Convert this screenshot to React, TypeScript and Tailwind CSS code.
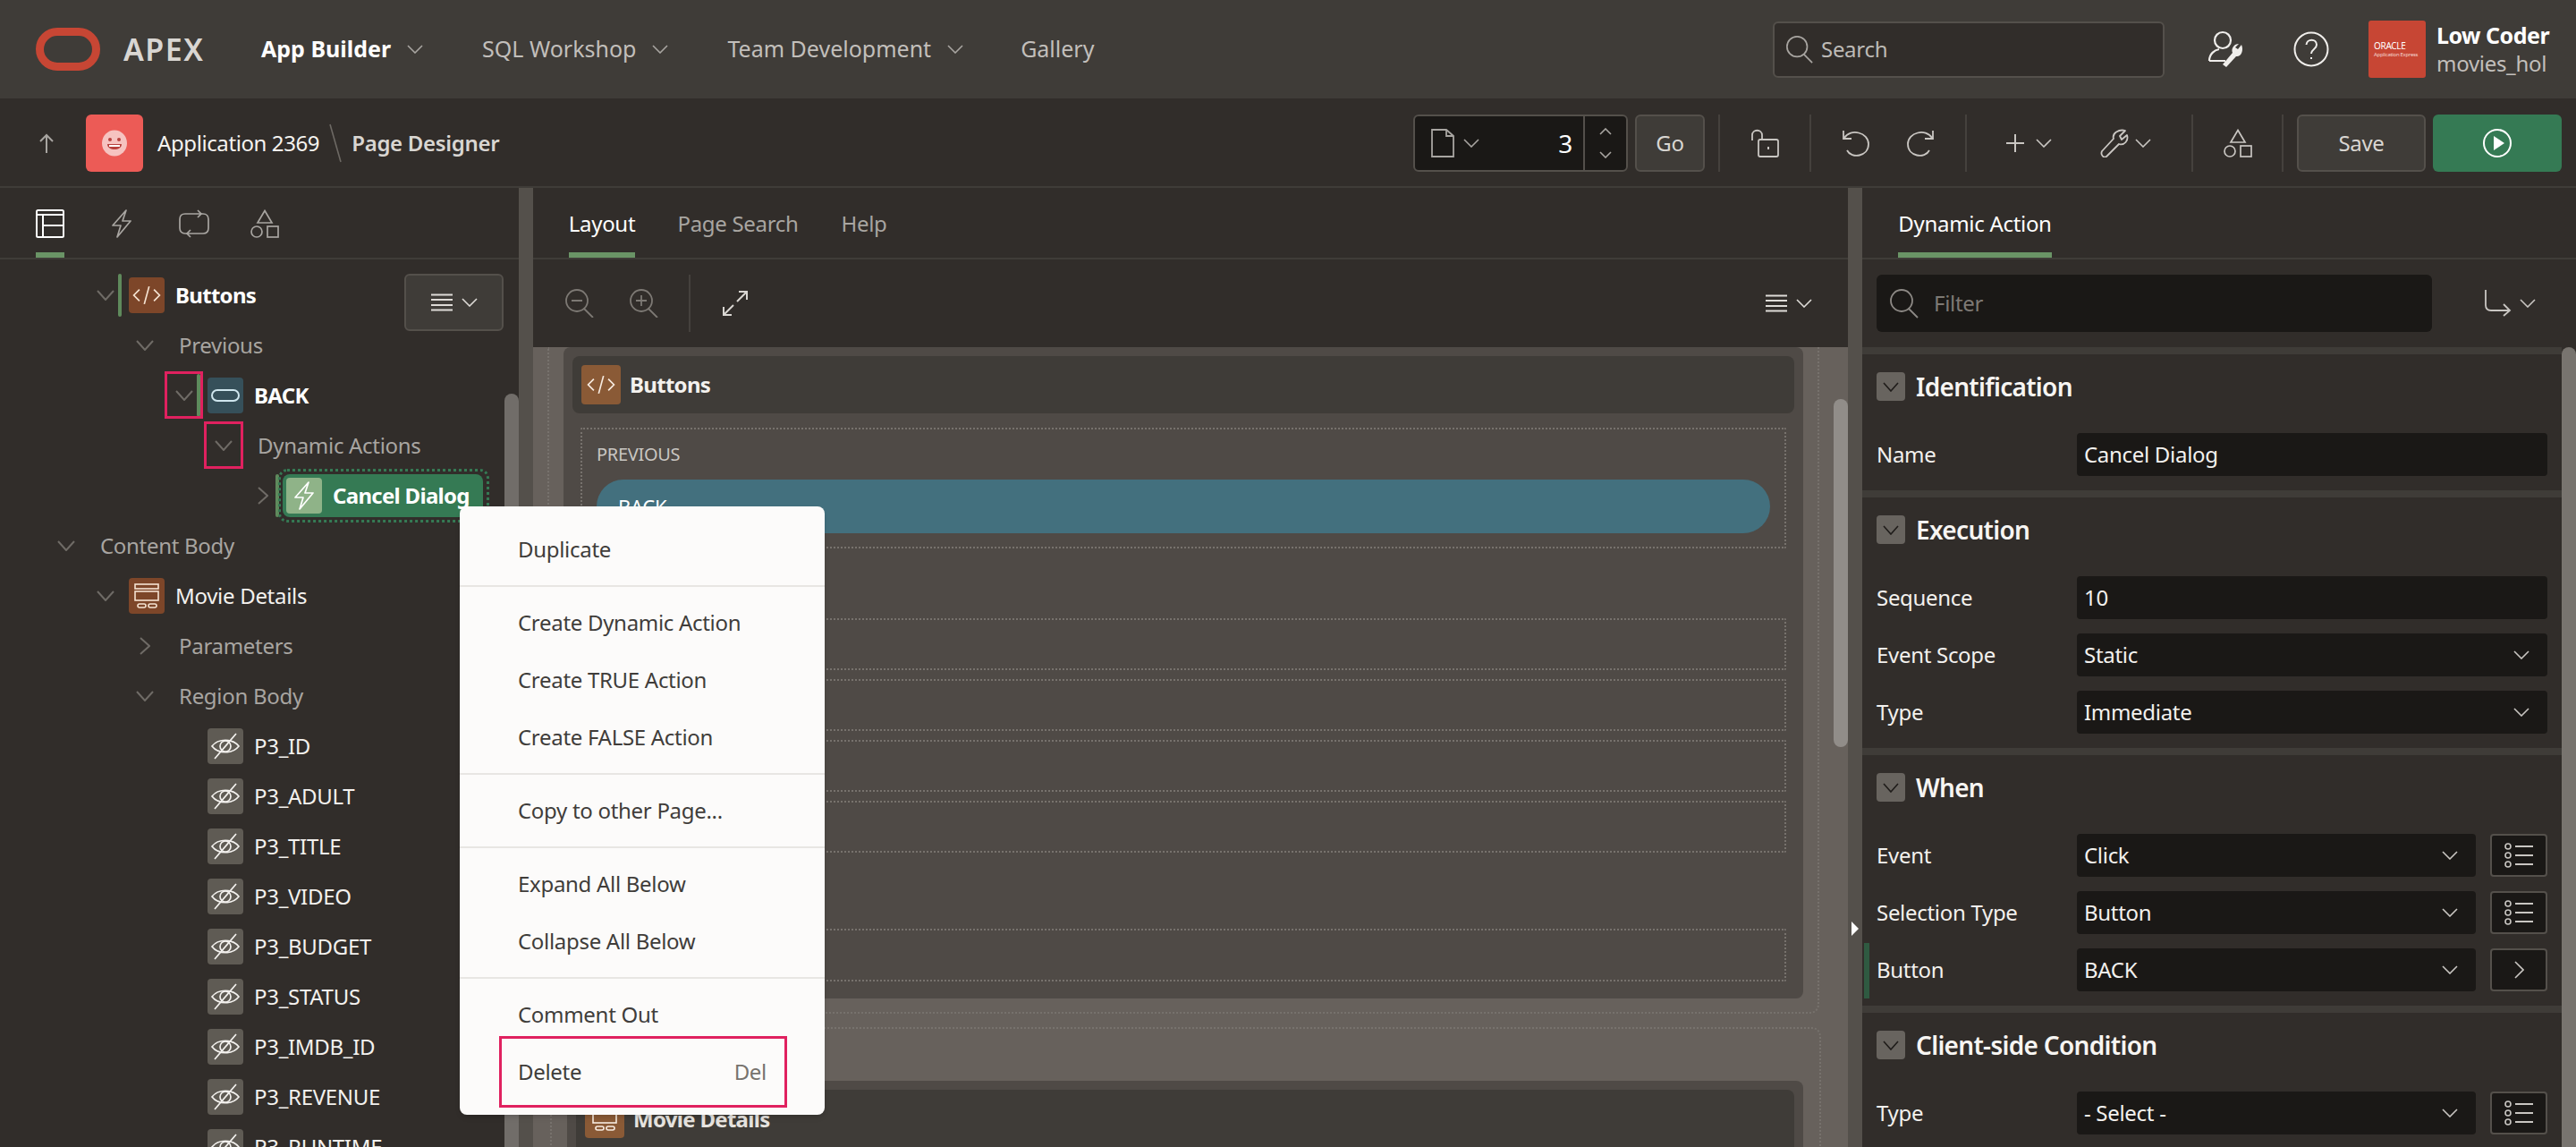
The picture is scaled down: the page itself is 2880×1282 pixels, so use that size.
import React from "react";

const font = "font-['Noto_Sans','Open_Sans',sans-serif]";

function Chev({ w = 16, h = 9, dir = "down", color = "#a8a5a1", sw = 1.6 }: { w?: number; h?: number; dir?: string; color?: string; sw?: number }) {
  const d =
    dir === "down"
      ? `M1 1 L${w / 2} ${h - 1} L${w - 1} 1`
      : dir === "up"
        ? `M1 ${h - 1} L${w / 2} 1 L${w - 1} ${h - 1}`
        : `M1 1 L${w - 1} ${h / 2} L1 ${h - 1}`;
  return (
    <svg width={w} height={h} viewBox={`0 0 ${w} ${h}`} fill="none" className="shrink-0">
      <path d={d} stroke={color} strokeWidth={sw} />
    </svg>
  );
}

function SearchIcon({ size = 34, color = "#a8a5a1" }: { size?: number; color?: string }) {
  return (
    <svg width={size} height={size} viewBox="0 0 34 34" fill="none" className="shrink-0">
      <ellipse cx="14" cy="14" rx="12" ry="12" stroke={color} strokeWidth="1.8" />
      <path d="M22 23 L32 33" stroke={color} strokeWidth="1.8" />
    </svg>
  );
}

function Shapes({ color = "#c9c6c2" }: { color?: string }) {
  return (
    <svg width="34" height="32" viewBox="0 0 34 32" fill="none" className="shrink-0">
      <path d="M17 1.5 L25 15 H9 Z" stroke={color} strokeWidth="1.7" />
      <circle cx="8" cy="25" r="6" stroke={color} strokeWidth="1.7" />
      <rect x="20" y="19" width="12" height="12" stroke={color} strokeWidth="1.7" />
    </svg>
  );
}

function Bolt({ color = "#a8a5a1", w = 24, h = 32 }: { color?: string; w?: number; h?: number }) {
  return (
    <svg width={w} height={h} viewBox="0 0 24 32" fill="none" className="shrink-0">
      <path d="M17 1 L2 18 H11 L7 31 L22 13 H13 Z" stroke={color} strokeWidth="1.7" strokeLinejoin="round" />
    </svg>
  );
}

function ListLines() {
  return (
    <svg width="26" height="20" viewBox="0 0 26 20" fill="none" className="shrink-0">
      <path d="M1 1.5 H25 M1 7 H25 M1 13 H25 M1 18.5 H25" stroke="#dedbd7" strokeWidth="1.8" />
    </svg>
  );
}

function CodeIcon({ size = 40, color = "#f5e3d2" }: { size?: number; color?: string }) {
  return (
    <svg width={size} height={size} viewBox="0 0 40 40" fill="none">
      <path d="M11 13 L4 20 L11 27 M29 13 L36 20 L29 27 M23 9 L17 31" stroke={color} strokeWidth="1.9" />
    </svg>
  );
}

function EyeOff() {
  return (
    <svg width="34" height="34" viewBox="0 0 34 34" fill="none">
      <path d="M2 17 C9 8 25 8 32 17 C25 26 9 26 2 17 Z" stroke="#f3f1ee" strokeWidth="1.7" />
      <circle cx="17" cy="17" r="6" stroke="#f3f1ee" strokeWidth="1.7" />
      <path d="M5 31 L29 3" stroke="#f3f1ee" strokeWidth="1.7" />
    </svg>
  );
}

function RegionIcon({ color = "#f5e3d2" }: { color?: string }) {
  return (
    <svg width="32" height="30" viewBox="0 0 32 30" fill="none">
      <rect x="3" y="2" width="26" height="5" stroke={color} strokeWidth="1.6" />
      <rect x="3" y="10" width="26" height="10" stroke={color} strokeWidth="1.6" />
      <rect x="6" y="24" width="9" height="4" rx="2" stroke={color} strokeWidth="1.6" />
      <rect x="18" y="24" width="9" height="4" rx="2" stroke={color} strokeWidth="1.6" />
    </svg>
  );
}

function NavItem({ label, active, chevron = true }: { label: string; active?: boolean; chevron?: boolean }) {
  return (
    <div className="flex items-center gap-[18px]">
      <span className={active ? "text-[25px] font-bold tracking-normal text-white" : "text-[25px] tracking-normal text-[#c2bfbb]"}>{label}</span>
      {chevron && <Chev w={18} h={10} color="#a8a5a1" />}
    </div>
  );
}

function Divider() {
  return <div className="h-16 w-[2px] shrink-0 bg-[#45413d]" />;
}

function TopBar() {
  return (
    <header className="flex h-[110px] shrink-0 items-center bg-[#3f3c38] pl-10 pr-7">
      <svg width="72" height="48" viewBox="0 0 72 48" fill="none" className="shrink-0">
        <rect x="4.5" y="4.5" width="63" height="39" rx="19.5" stroke="#c74634" strokeWidth="9" />
      </svg>
      <span className="ml-[26px] w-[154px] text-[34px] font-semibold tracking-[1.5px] text-[#d9d6d2]">APEX</span>
      <NavItem label="App Builder" active />
      <div className="ml-[66px]"><NavItem label="SQL Workshop" /></div>
      <div className="ml-[66px]"><NavItem label="Team Development" /></div>
      <div className="ml-[64px]"><NavItem label="Gallery" chevron={false} /></div>
      <div className="ml-auto flex h-[63px] w-[438px] items-center gap-2 rounded-md border-2 border-[#54504b] bg-[#312d2a] pl-3">
        <SearchIcon size={32} />
        <span className="text-[24px] text-[#bdbab6]">Search</span>
      </div>
      <svg width="42" height="42" viewBox="0 0 42 42" fill="none" className="ml-[48px] shrink-0">
        <circle cx="17" cy="11" r="9" stroke="#f0eeeb" strokeWidth="2.2" />
        <path d="M2 34 C2 26 8 22 13 21 M2 34 H20" stroke="#f0eeeb" strokeWidth="2.2" />
        <path d="M38 16 L34 21 L31 19 L35 15 C30 15 26 20 28 25 L17 38 L21 41 L32 29 C37 30 41 23 38 16 Z" fill="#f0eeeb" />
      </svg>
      <svg width="40" height="40" viewBox="0 0 40 40" fill="none" className="ml-[54px] shrink-0">
        <circle cx="20" cy="20" r="18.5" stroke="#f0eeeb" strokeWidth="2" />
        <path d="M14.5 15 C15 8 26 8 26 15 C26 20 20 20 20 25 M20 29 V31" stroke="#f0eeeb" strokeWidth="2" />
      </svg>
      <div className="ml-[44px] flex h-16 w-16 shrink-0 flex-col justify-center rounded-[3px] bg-[#c74634] pl-[6px] text-white">
        <span className="text-[10px] leading-[12px]">ORACLE</span>
        <span className="whitespace-nowrap text-[6px] leading-[9px] text-[#f3d5cf]">Application Express</span>
      </div>
      <div className="ml-[12px] flex w-[128px] flex-col whitespace-nowrap">
        <span className="text-[25px] leading-[32px] font-bold tracking-[-0.5px] text-white">Low Coder</span>
        <span className="text-[24px] leading-[32px] text-[#c2bfbb]">movies_hol</span>
      </div>
    </header>
  );
}

function SecondBar() {
  return (
    <div className="flex h-[100px] shrink-0 items-start border-b-2 border-[#3f3c38] bg-[#312d2a] pt-[18px] pl-[44px]">
      <div className="flex h-16 items-center">
        <svg width="16" height="22" viewBox="0 0 16 22" fill="none" className="shrink-0">
          <path d="M8 22 V2 M1 9 L8 2 L15 9" stroke="#a8a5a1" strokeWidth="2" />
        </svg>
        <div className="ml-9 flex h-16 w-16 items-center justify-center rounded-md bg-[#ec5b56]">
          <svg width="30" height="30" viewBox="0 0 30 30">
            <ellipse cx="15" cy="15" rx="14" ry="14.5" fill="#f6c3c0" />
            <circle cx="10" cy="11" r="2" fill="#b8423e" />
            <circle cx="20" cy="11" r="2" fill="#b8423e" />
            <path d="M7 16 H23 C23 24 7 24 7 16 Z" fill="#b8423e" />
            <path d="M9 17 H21 V19 H9 Z" fill="#ffffff" />
          </svg>
        </div>
        <span className="ml-4 text-[24px] tracking-[-0.4px] text-[#f5f3f0]">Application 2369</span>
        <svg width="16" height="44" viewBox="0 0 16 44" className="mx-[10px] shrink-0">
          <path d="M2 1 L14 43" stroke="#6d6964" strokeWidth="1.6" />
        </svg>
        <span className="text-[24px] font-semibold tracking-[-0.3px] text-[#d9d6d2]">Page Designer</span>
      </div>
      <div className="ml-auto flex h-16 items-center pr-4">
        <div className="flex h-16 w-[240px] items-stretch rounded-md border-2 border-[#54504b] bg-[#1a1816]">
          <div className="flex flex-1 items-center pl-[18px] pr-3">
            <svg width="26" height="32" viewBox="0 0 26 32" fill="none" className="shrink-0">
              <path d="M1 1 H17 L25 8 V31 H1 Z M17 1 V8 H25" stroke="#a8a5a1" strokeWidth="1.8" />
            </svg>
            <span className="ml-[10px]"><Chev w={18} h={10} /></span>
            <span className="ml-auto text-[28px] text-white">3</span>
          </div>
          <div className="flex w-12 flex-col items-center justify-center gap-[18px] border-l-2 border-[#54504b]">
            <Chev w={14} h={8} dir="up" />
            <Chev w={14} h={8} />
          </div>
        </div>
        <div className="ml-2 flex h-16 w-[78px] items-center justify-center rounded-md border-2 border-[#54504b] bg-[#3f3c38] text-[24px] text-[#d9d6d2]">Go</div>
        <div className="ml-[15px]"><Divider /></div>
        <svg width="32" height="32" viewBox="0 0 32 32" fill="none" className="ml-[34px] shrink-0">
          <path d="M2 13 V7 C2 0 13 0 13 7 V12" stroke="#c9c6c2" strokeWidth="1.8" />
          <rect x="9" y="12" width="22" height="19" rx="2" stroke="#c9c6c2" strokeWidth="1.8" />
          <path d="M20 20 V23" stroke="#c9c6c2" strokeWidth="2" />
        </svg>
        <div className="ml-[34px]"><Divider /></div>
        <svg width="32" height="32" viewBox="0 0 32 32" fill="none" className="ml-[34px] shrink-0">
          <path d="M2 2 V11 H11 M3 10 C10 -1 30 4 30 17 C30 31 11 34 6 24" stroke="#c9c6c2" strokeWidth="1.8" />
        </svg>
        <svg width="32" height="32" viewBox="0 0 32 32" fill="none" className="ml-10 shrink-0">
          <path d="M30 2 V11 H21 M29 10 C22 -1 2 4 2 17 C2 31 21 34 26 24" stroke="#c9c6c2" strokeWidth="1.8" />
        </svg>
        <div className="ml-[34px]"><Divider /></div>
        <svg width="20" height="20" viewBox="0 0 20 20" fill="none" className="ml-[44px] shrink-0">
          <path d="M10 0 V20 M0 10 H20" stroke="#c9c6c2" strokeWidth="2" />
        </svg>
        <span className="ml-[13px]"><Chev w={18} h={10} color="#c9c6c2" /></span>
        <svg width="32" height="32" viewBox="0 0 32 32" fill="none" className="ml-[54px] shrink-0">
          <path d="M28 2 L22 8 L24 12 L30 7 C32 13 27 19 21 17 L7 31 C4 33 0 29 2 25 L15 11 C13 5 21 0 28 2 Z" stroke="#c9c6c2" strokeWidth="1.8" strokeLinejoin="round" />
        </svg>
        <span className="ml-[7px]"><Chev w={18} h={10} color="#c9c6c2" /></span>
        <div className="ml-[45px]"><Divider /></div>
        <div className="ml-[33px]"><Shapes /></div>
        <div className="ml-[32px]"><Divider /></div>
        <div className="ml-[15px] flex h-16 w-[144px] items-center justify-center rounded-md border-2 border-[#54504b] bg-[#3f3c38] text-[24px] text-[#d9d6d2]">Save</div>
        <div className="ml-2 flex h-16 w-[144px] items-center justify-center rounded-md bg-[#357a54]">
          <svg width="32" height="32" viewBox="0 0 32 32" fill="none">
            <circle cx="16" cy="16" r="15" stroke="#ffffff" strokeWidth="2" />
            <path d="M12 8 L24 16 L12 24 Z" fill="#ffffff" />
          </svg>
        </div>
      </div>
    </div>
  );
}

function TabBar({ tabs, className }: { tabs: { label: string; active?: boolean; w: string }[]; className: string }) {
  return (
    <div className={`flex h-20 shrink-0 items-stretch border-b-2 border-[#3f3c38] ${className}`}>
      {tabs.map((tab) => (
        <div key={tab.label} className={`flex flex-col items-center ${tab.w}`}>
          <span className={`flex-1 whitespace-nowrap pt-[22px] text-[24px] ${tab.active ? "text-white" : "text-[#a8a5a1]"}`}>{tab.label}</span>
          {tab.active && <div className="h-[6px] w-full bg-[#6a9466]" />}
        </div>
      ))}
    </div>
  );
}

type RowProps = {
  level: number;
  chevron?: "down" | "right";
  bar?: boolean;
  tile?: string;
  icon?: React.ReactNode;
  label: string;
  strong?: boolean;
  muted?: boolean;
};

function TreeRow({ level, chevron, bar, tile, icon, label, strong, muted }: RowProps) {
  const chevronColor = "#6f6b66";
  return (
    <div className="flex h-14 items-center" style={{ paddingLeft: 14 + 44 * level }}>
      <div className="flex w-8 justify-center">
        {chevron === "down" && <Chev w={20} h={12} color={chevronColor} sw={2} />}
        {chevron === "right" && <Chev w={12} h={20} dir="right" color={chevronColor} sw={2} />}
      </div>
      <div className={`-ml-[2px] h-12 w-1 rounded-sm ${bar ? "bg-[#5f8a5c]" : ""}`} />
      {tile ? (
        <>
          <div className={`ml-2 flex h-10 w-10 items-center justify-center rounded-[4px] ${tile}`}>{icon}</div>
          <span className={`ml-3 text-[24px] ${strong ? "font-bold tracking-[-0.7px] text-white" : "text-[#f3f1ee]"}`}>{label}</span>
        </>
      ) : (
        <span className={`ml-5 text-[24px] ${muted ? "text-[#a8a5a1]" : "text-white"}`}>{label}</span>
      )}
    </div>
  );
}

const hiddenItems = ["P3_ID", "P3_ADULT", "P3_TITLE", "P3_VIDEO", "P3_BUDGET", "P3_STATUS", "P3_IMDB_ID", "P3_REVENUE", "P3_RUNTIME"];

function LeftPanel() {
  return (
    <aside className="relative flex w-[580px] shrink-0 flex-col bg-[#312d2a]">
      <div className="flex h-20 shrink-0 border-b-2 border-[#3f3c38] pl-10">
        <div className="flex h-[78px] w-8 flex-col">
          <svg width="32" height="32" viewBox="0 0 32 32" fill="none" className="mt-6">
            <rect x="1" y="1" width="30" height="30" rx="1.5" stroke="#ffffff" strokeWidth="2" />
            <path d="M1 6 H31 M8 6 V31 M8 18 H31" stroke="#ffffff" strokeWidth="2" />
          </svg>
          <div className="mt-auto h-[6px] w-8 bg-[#6a9466]" />
        </div>
        <div className="mt-6 ml-[52px]"><Bolt /></div>
        <svg width="34" height="32" viewBox="0 0 34 32" fill="none" className="mt-6 ml-[52px]">
          <path d="M21 1 L25 5 L21 9 M25 5 H7 C3 5 1 7 1 11 V21 C1 24 3 27 7 27 H9" stroke="#a8a5a1" strokeWidth="1.7" />
          <path d="M13 31 L9 27 L13 23 M9 27 H27 C31 27 33 25 33 21 V11 C33 8 31 5 27 5 H25" stroke="#a8a5a1" strokeWidth="1.7" />
        </svg>
        <div className="mt-6 ml-[45px]"><Shapes color="#a8a5a1" /></div>
      </div>
      <div className="flex min-h-0 flex-1">
        <div className="flex-1 overflow-hidden pt-3">
          <TreeRow level={2} chevron="down" bar tile="bg-[#7d4629]" icon={<CodeIcon size={36} />} label="Buttons" strong />
          <TreeRow level={3} chevron="down" label="Previous" muted />
          <TreeRow
            level={4}
            chevron="down"
            bar
            tile="bg-[#36505a]"
            icon={
              <svg width="32" height="14" viewBox="0 0 32 14" fill="none">
                <rect x="1" y="1" width="30" height="12" rx="6" stroke="#cfe6ee" strokeWidth="2" />
              </svg>
            }
            label="BACK"
            strong
          />
          <TreeRow level={5} chevron="down" label="Dynamic Actions" muted />
          <div className="flex h-14 items-center pl-[278px]">
            <div className="flex w-8 justify-center"><Chev w={12} h={20} dir="right" color="#6f6b66" sw={2} /></div>
            <div className="-ml-[2px] h-12 w-1 rounded-sm bg-[#5f8a5c]" />
            <div className="-ml-[1px] rounded-[10px] border-[3px] border-dotted border-[#357a54] py-[3px] pr-1 pl-[2px]">
              <div className="flex h-12 w-[224px] items-center rounded-lg bg-[#357a54] pl-1">
                <div className="flex h-10 w-10 items-center justify-center rounded-[4px] bg-[#8fb388]"><Bolt color="#ffffff" w={24} h={32} /></div>
                <span className="ml-3 whitespace-nowrap text-[24px] font-bold tracking-[-0.7px] text-white">Cancel Dialog</span>
              </div>
            </div>
          </div>
          <TreeRow level={1} chevron="down" label="Content Body" muted />
          <TreeRow level={2} chevron="down" tile="bg-[#7d4629]" icon={<RegionIcon />} label="Movie Details" />
          <TreeRow level={3} chevron="right" label="Parameters" muted />
          <TreeRow level={3} chevron="down" label="Region Body" muted />
          {hiddenItems.map((name) => (
            <TreeRow key={name} level={4} tile="bg-[#5f5b54]" icon={<EyeOff />} label={name} />
          ))}
        </div>
        <div className="flex w-4 shrink-0 flex-col pt-[150px]">
          <div className="flex-1 rounded-t-full bg-[#716d69]" />
        </div>
      </div>
      <div className="absolute top-[96px] left-[452px] flex h-16 w-[111px] items-center justify-center gap-[9px] rounded-md border-2 border-[#54504b] bg-[#3f3c38]">
        <ListLines />
        <Chev w={18} h={10} color="#dedbd7" />
      </div>
    </aside>
  );
}

function Dashed({ className, children }: { className: string; children?: React.ReactNode }) {
  return <div className={`rounded-[2px] border-2 border-dotted border-[#77726d] ${className}`}>{children}</div>;
}

function CenterPanel() {
  return (
    <main className="flex min-w-0 flex-1 flex-col bg-[#312d2a]">
      <TabBar
        className="gap-[48px] pl-10"
        tabs={[
          { label: "Layout", active: true, w: "w-[74px]" },
          { label: "Page Search", w: "w-[134px]" },
          { label: "Help", w: "w-[52px]" },
        ]}
      />
      <div className="flex h-[98px] shrink-0 items-center pl-[36px] pr-[40px]">
        <svg width="32" height="32" viewBox="0 0 32 32" fill="none" className="shrink-0">
          <circle cx="13" cy="13" r="12" stroke="#7d7974" strokeWidth="1.8" />
          <path d="M21 22 L31 32 M7 13 H19" stroke="#7d7974" strokeWidth="1.8" />
        </svg>
        <svg width="32" height="32" viewBox="0 0 32 32" fill="none" className="ml-10 shrink-0">
          <circle cx="13" cy="13" r="12" stroke="#7d7974" strokeWidth="1.8" />
          <path d="M21 22 L31 32 M7 13 H19 M13 7 V19" stroke="#7d7974" strokeWidth="1.8" />
        </svg>
        <div className="ml-[34px] h-16 w-[2px] bg-[#45413d]" />
        <svg width="28" height="28" viewBox="0 0 28 28" fill="none" className="ml-[36px] shrink-0">
          <path d="M16 12 L27 1 M18 1 H27 V10 M12 16 L1 27 M1 18 V27 H10" stroke="#d9d6d2" strokeWidth="2" />
        </svg>
        <div className="ml-auto flex items-center gap-[9px]">
          <ListLines />
          <Chev w={18} h={10} color="#dedbd7" />
        </div>
      </div>
      <div className="flex min-h-0 flex-1 overflow-hidden bg-[#67615c]">
        <div className="min-w-0 flex-1 pl-4 pr-4">
          <div className="rounded-b-[10px] border-x-2 border-b-2 border-dotted border-[#77726d] pb-[15px] pl-4 pr-4">
            <div className="rounded-[8px] bg-[#4f4a46] px-[10px] pt-[10px] pb-[19px]">
              <div className="flex h-16 items-center rounded-[8px] bg-[#3f3c38] pl-[10px]">
                <div className="flex h-11 w-11 items-center justify-center rounded-[4px] bg-[#8a5a36]"><CodeIcon size={36} color="#f7ebe0" /></div>
                <span className="ml-[10px] text-[24px] font-bold tracking-[-0.7px] text-[#f3f1ee]">Buttons</span>
              </div>
              <div className="mx-[9px] mt-4 flex flex-col">
                <Dashed className="h-[135px] px-4 pt-[14px]">
                  <div className="flex h-7 items-center text-[20px] text-[#c9c6c2]">PREVIOUS</div>
                  <div className="mt-[14px] flex h-[60px] items-center rounded-full bg-[#43707e] pl-6 text-[22px] text-white">BACK</div>
                </Dashed>
                <Dashed className="mt-[78px] h-[58px]" />
                <Dashed className="mt-[10px] h-[58px]" />
                <Dashed className="mt-[10px] h-[58px]" />
                <Dashed className="mt-[10px] h-[58px]" />
                <Dashed className="mt-[85px] h-[59px]" />
              </div>
            </div>
          </div>
          <div className="mt-[15px] ml-[3px] -mr-[2px] rounded-t-[10px] border-x-2 border-t-2 border-dotted border-[#77726d] pt-[58px] pl-[17px] pr-[18px]">
            <div className="h-[200px] rounded-[8px] bg-[#4f4a46] px-[10px] pt-[10px]">
              <div className="flex h-[120px] rounded-[8px] bg-[#3f3c38] pt-[10px] pl-[10px]">
                <div className="flex h-11 w-11 items-center justify-center rounded-[4px] bg-[#8a5a36]"><RegionIcon color="#f7ebe0" /></div>
                <span className="mt-[5px] ml-[10px] text-[24px] font-bold tracking-[-0.7px] text-[#e6e3df]">Movie Details</span>
              </div>
            </div>
          </div>
        </div>
        <div className="flex w-4 shrink-0 flex-col">
          <div className="mt-[58px] h-[389px] rounded-full bg-[#918d89]" />
        </div>
      </div>
    </main>
  );
}

function Field({ label, value, select, side, marked }: { label: string; value: string; select?: boolean; side?: "list" | "arrow"; marked?: boolean }) {
  return (
    <div className="relative grid h-12 grid-cols-[224px_1fr] items-center text-[24px] text-[#f3f1ee]">
      {marked && <div className="absolute top-[-6px] left-[-14px] h-[62px] w-[6px] bg-[#2f5a41]" />}
      <span>{label}</span>
      <div className="flex h-12 gap-4">
        <div className="flex flex-1 items-center justify-between rounded-[4px] bg-[#1a1816] pr-[20px] pl-2">
          <span>{value}</span>
          {select && <Chev w={18} h={10} color="#c9c6c2" />}
        </div>
        {side && (
          <div className="flex w-16 items-center justify-center rounded-[4px] border-2 border-[#54504b] bg-[#1a1816]">
            {side === "list" ? (
              <svg width="32" height="28" viewBox="0 0 32 28" fill="none">
                <circle cx="4" cy="4" r="3" stroke="#c9c6c2" strokeWidth="1.6" />
                <circle cx="4" cy="14" r="3" stroke="#c9c6c2" strokeWidth="1.6" />
                <circle cx="4" cy="24" r="3" stroke="#c9c6c2" strokeWidth="1.6" />
                <path d="M12 4 H32 M12 14 H32 M12 24 H32" stroke="#c9c6c2" strokeWidth="1.8" />
              </svg>
            ) : (
              <Chev w={11} h={20} dir="right" color="#c9c6c2" />
            )}
          </div>
        )}
      </div>
    </div>
  );
}

function Section({ title, children }: { title: string; children: React.ReactNode }) {
  return (
    <section>
      <div className="h-2 bg-[#3f3c38]" />
      <div className="px-4 pt-5 pb-4">
        <div className="mb-9 flex h-8 items-center">
          <div className="flex h-8 w-8 items-center justify-center rounded-[4px] bg-[#68645f]">
            <Chev w={18} h={11} color="#1f1c1a" />
          </div>
          <h2 className="ml-3 text-[28px] font-semibold tracking-[-0.7px] text-[#f7f5f2]">{title}</h2>
        </div>
        <div className="flex flex-col gap-4">{children}</div>
      </div>
    </section>
  );
}

function RightPanel() {
  return (
    <aside className="relative flex w-[798px] shrink-0 flex-col bg-[#312d2a]">
      <TabBar className="pl-10" tabs={[{ label: "Dynamic Action", active: true, w: "w-[172px]" }]} />
      <div className="flex h-[98px] shrink-0 items-center pl-4">
        <div className="flex h-16 w-[621px] items-center rounded-md bg-[#1a1816] pl-[14px]">
          <SearchIcon size={34} color="#8d8985" />
          <span className="ml-4 text-[24px] text-[#7d7974]">Filter</span>
        </div>
        <svg width="32" height="30" viewBox="0 0 32 30" fill="none" className="ml-[58px] shrink-0">
          <path d="M2 0 V17 C2 21 4 23 8 23 H29 M22 16 L29 23 L22 29" stroke="#c9c6c2" strokeWidth="1.8" />
        </svg>
        <span className="ml-2"><Chev w={18} h={10} color="#c9c6c2" /></span>
      </div>
      <div className="flex min-h-0 flex-1 overflow-hidden">
        <div className="min-w-0 flex-1">
          <Section title="Identification">
            <Field label="Name" value="Cancel Dialog" />
          </Section>
          <Section title="Execution">
            <Field label="Sequence" value="10" />
            <Field label="Event Scope" value="Static" select />
            <Field label="Type" value="Immediate" select />
          </Section>
          <Section title="When">
            <Field label="Event" value="Click" select side="list" />
            <Field label="Selection Type" value="Button" select side="list" />
            <Field label="Button" value="BACK" select side="arrow" marked />
          </Section>
          <Section title="Client-side Condition">
            <Field label="Type" value="- Select -" select side="list" />
          </Section>
        </div>
        <div className="w-4 shrink-0 rounded-t-full bg-[#78746f]" />
      </div>
    </aside>
  );
}

const menuGroups = [
  ["Duplicate"],
  ["Create Dynamic Action", "Create TRUE Action", "Create FALSE Action"],
  ["Copy to other Page..."],
  ["Expand All Below", "Collapse All Below"],
  ["Comment Out", "Delete"],
];

function ContextMenu() {
  return (
    <div className="absolute top-[566px] left-[514px] w-[408px] rounded-lg bg-[#fcfbfa] py-4 text-[24px] text-[#403d3a] shadow-md">
      {menuGroups.map((group, i) => (
        <div key={group[0]} className={i > 0 ? "mt-2 border-t-2 border-[#e8e6e3] pt-2" : ""}>
          {group.map((item) => (
            <div key={item} className="flex h-16 items-center justify-between pr-[65px] pl-[65px]">
              <span>{item}</span>
              {item === "Delete" && <span className="text-[#77736e]">Del</span>}
            </div>
          ))}
        </div>
      ))}
      <div className="absolute top-[592px] left-[44px] h-[80px] w-[322px] border-[3px] border-[#e0215f]" />
    </div>
  );
}

export default function App() {
  return (
    <div className={`relative flex h-[1282px] w-[2880px] flex-col overflow-hidden bg-[#312d2a] tracking-[-0.3px] ${font}`}>
      <TopBar />
      <SecondBar />
      <div className="flex min-h-0 flex-1">
        <LeftPanel />
        <div className="w-4 shrink-0 bg-[#54504b]" />
        <CenterPanel />
        <div className="flex w-4 shrink-0 items-center justify-center bg-[#54504b] pt-[584px]">
          <div className="h-0 w-0 border-y-[8px] border-l-[8px] border-y-transparent border-l-white" />
        </div>
        <RightPanel />
      </div>
      <div className="absolute top-[415px] left-[184px] h-[53px] w-[43px] border-[3px] border-[#e0215f]" />
      <div className="absolute top-[471px] left-[228px] h-[53px] w-[44px] border-[3px] border-[#e0215f]" />
      <ContextMenu />
    </div>
  );
}
